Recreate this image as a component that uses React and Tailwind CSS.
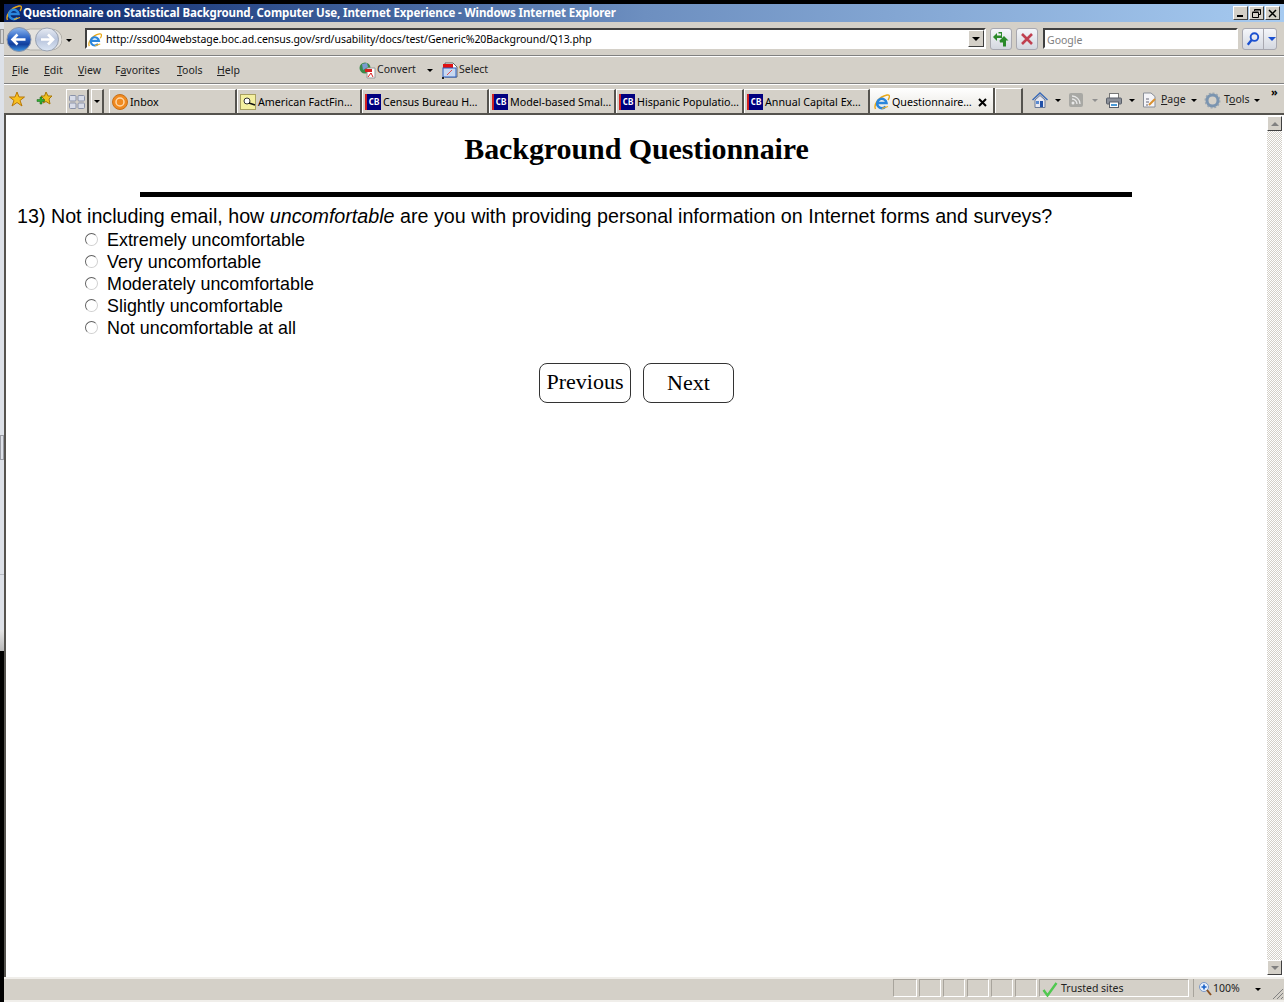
import React from "react";

const F = "font-['Liberation_Sans',Arial,sans-serif]";
const T = "font-['Noto_Sans',sans-serif]";

function IE({ s = 16 }) {
  return (
    <svg width={s} height={s} viewBox="0 0 16 16" className="shrink-0">
      <path d="M1.500 15C-.500 11 4 3 13 1C16 .500 16 3 14 6" fill="none" stroke="#e8a818" strokeWidth="1.400" />
      <path d="M3.800 9H12.500A4.700 4.700 0 1 0 11.500 12.500" fill="none" stroke="#2a86dc" strokeWidth="2.500" />
      <path d="M8 14.500L14 12.500" stroke="#f0b020" strokeWidth="1.200" />
    </svg>
  );
}

function CB() {
  return (
    <span className="w-[16px] h-[16px] bg-[#000080] text-white text-[9px] leading-[16px] font-bold font-['DejaVu_Sans_Mono',monospace] text-center shrink-0 border-l-2 border-l-[#d02020]">
      CB
    </span>
  );
}

function Caret({ className = "border-t-black" }) {
  return <span className={`block w-0 h-0 border-x-[3px] border-x-transparent border-t-[3px] shrink-0 ${className}`} />;
}

function Tab({ w, icon, label }) {
  return (
    <div className={`h-[24px] flex items-center pl-[2px] pt-[1px] gap-[2px] border-t border-l border-t-white border-l-white border-r-2 border-r-[#55534e] overflow-hidden shrink-0 ${w}`}>
      {icon}
      <span className="text-[10.7px] text-black whitespace-nowrap">{label}</span>
    </div>
  );
}

function Radio({ label }) {
  return (
    <div className="h-[22px] flex items-center pl-[79px]">
      <span className="w-[13px] h-[13px] rounded-full border border-t-[#606060] border-l-[#606060] border-r-[#d0d0d0] border-b-[#d0d0d0] bg-white -mt-[2px] shrink-0" />
      <span className="ml-[9px] text-black">{label}</span>
    </div>
  );
}

function WinBtn({ children }) {
  return (
    <span className="w-[15px] h-[14px] bg-[#d4d0c8] border border-t-white border-l-white border-r-[#404040] border-b-[#404040] flex items-center justify-center text-black">
      {children}
    </span>
  );
}

function SB({ up }) {
  return (
    <div className="w-[15px] h-[15px] shrink-0 bg-[#d4d0c8] border border-t-white border-l-white border-r-[#404040] border-b-[#404040] flex items-center justify-center">
      <span className={`w-0 h-0 border-x-[4px] border-x-transparent ${up ? "border-b-[4px] border-b-[#808080]" : "border-t-[4px] border-t-[#808080]"}`} />
    </div>
  );
}

const glossBtn = "h-[22px] rounded-[3px] border border-[#a8a8b0] bg-gradient-to-b from-[#f4f6fa] to-[#d4d8e0] flex items-center shrink-0";
const sunken = "border-2 border-t-[#404040] border-l-[#404040] border-r-white border-b-white";

export default function App() {
  return (
    <div className={`w-[1284px] h-[1002px] overflow-hidden flex bg-black ${T}`}>
      {/* strip of what lies behind the window */}
      <div className="w-[4px] shrink-0 flex flex-col bg-[#dde1e8]">
        <div className="h-[22px] bg-black shrink-0" />
        <div className="h-[15px] mt-[7px] shrink-0 border border-[#9a9a9a] bg-[#d4d4d4]" />
        <div className="h-[25px] mt-[391px] shrink-0 border border-[#9a9ca4] bg-[#dde1e8]" />
        <div className="h-[1px] mt-[114px] shrink-0 bg-[#b8bcc4]" />
        <div className="h-[21px] mt-[55px] shrink-0 bg-gradient-to-b from-[#e4e4e4] to-[#b8b8b8]" />
        <div className="flex-1 bg-black" />
      </div>

      {/* IE window */}
      <div className="w-[1280px] shrink-0 flex flex-col bg-[#d4d0c8]">
        <div className="h-[4px] bg-black shrink-0" />
        {/* title bar */}
        <div className="h-[18px] shrink-0 flex items-center pl-[2px] pr-[4px] bg-gradient-to-r from-[#0a246a] via-[#6d8fc0] to-[#a6caf0]">
          <IE s={16} />
          <span className="ml-[1px] text-[11.500px] tracking-[-0.110px] font-bold text-white whitespace-nowrap">
            Questionnaire on Statistical Background, Computer Use, Internet Experience - Windows Internet Explorer
          </span>
          <div className="ml-auto flex gap-[1px]">
            <WinBtn>
              <span className="w-[6px] h-[2px] bg-black mt-[6px] mr-[2px]" />
            </WinBtn>
            <WinBtn>
              <svg width="9" height="9" viewBox="0 0 9 9" fill="none" stroke="black">
                <path d="M2.500 2V.500H8.500V5.500H6.500" />
                <path d="M.500 3.500H6.500V8.500H.500Z" />
                <path d="M.500 3H6.500M2.500 1H8.500" />
              </svg>
            </WinBtn>
            <WinBtn>
              <svg width="9" height="9" viewBox="0 0 9 9" stroke="black" strokeWidth="1.500">
                <path d="M1 1L8 8M8 1L1 8" />
              </svg>
            </WinBtn>
          </div>
        </div>

        {/* address row */}
        <div className="h-[34px] shrink-0 flex items-start pt-[6px] pl-[2px] border-b border-b-[#808080]">
          <svg width="56" height="28" viewBox="0 0 56 28" className="shrink-0 -mt-[2px]">
            <defs>
              <linearGradient id="backg" x1="0" y1="0" x2="0" y2="1">
                <stop offset="0" stopColor="#8fb8ee" />
                <stop offset="0.450" stopColor="#2a62c4" />
                <stop offset="0.700" stopColor="#123f9c" />
                <stop offset="1" stopColor="#3f9ae8" />
              </linearGradient>
              <linearGradient id="fwdg" x1="0" y1="0" x2="0" y2="1">
                <stop offset="0" stopColor="#e8ecf4" />
                <stop offset="0.500" stopColor="#b8c4dc" />
                <stop offset="1" stopColor="#dce6f4" />
              </linearGradient>
            </defs>
            <rect x="14" y="3" width="42" height="21" rx="10.500" fill="#e4e2de" stroke="#b0aea8" />
            <circle cx="13" cy="13.500" r="12" fill="url(#backg)" stroke="#8a94a8" />
            <path d="M6.500 13.500H19.500M11.500 8.500L6.500 13.500L11.500 18.500" fill="none" stroke="white" strokeWidth="2.600" />
            <circle cx="41" cy="13.500" r="11.500" fill="url(#fwdg)" stroke="#9aa2b0" />
            <path d="M35 13.500H47M42 8.500L47 13.500L42 18.500" fill="none" stroke="white" strokeWidth="2.600" />
          </svg>
          <Caret className="ml-[4px] mt-[11px] border-t-black" />
          <div className={`w-[901px] h-[21px] ml-[13px] flex items-center bg-white shrink-0 ${sunken}`}>
            <span className="ml-[1px] pt-[3px]"><IE s={14} /></span>
            <span className="ml-[4px] pt-[3px] text-[10.500px] tracking-[-0.040px] text-black whitespace-nowrap">
              http://ssd004webstage.boc.ad.census.gov/srd/usability/docs/test/Generic%20Background/Q13.php
            </span>
            <span className="ml-auto w-[16px] h-[17px] bg-[#d4d0c8] border border-t-white border-l-white border-r-[#404040] border-b-[#404040] flex items-center justify-center">
              <span className="w-0 h-0 border-x-[4px] border-x-transparent border-t-[4px] border-t-black" />
            </span>
          </div>
          <div className={`ml-[4px] w-[22px] justify-center ${glossBtn}`}>
            <svg width="16" height="15" viewBox="0 0 16 15">
              <path d="M0 5L4 1V3.500H8V1.500H5.500V0H9V6H4V9Z" fill="#2a8a2a" />
              <path d="M6.500 8.500L11 4L15.500 8.500H13V14.500H10V10.500H7Z" fill="#2a8a2a" />
            </svg>
          </div>
          <div className={`ml-[4px] w-[22px] justify-center ${glossBtn}`}>
            <svg width="14" height="14" viewBox="0 0 14 14" stroke="#c04050" strokeWidth="2.600">
              <path d="M2 2L12 12M12 2L2 12" />
            </svg>
          </div>
          <div className={`ml-[5px] w-[195px] h-[21px] bg-white text-[10.500px] text-[#808080] leading-[20px] pl-[2px] ${sunken}`}>
            Google
          </div>
          <div className={`ml-[4px] w-[35px] ${glossBtn}`}>
            <svg width="21" height="20" viewBox="0 0 21 20" fill="none" stroke="#1a50d0" strokeWidth="2" className="border-r border-r-[#a8a8b0]">
              <circle cx="12" cy="8" r="4" />
              <path d="M9 11L5 16" strokeWidth="2.500" />
            </svg>
            <span className="ml-[4px] w-0 h-0 border-x-[4px] border-x-transparent border-t-[4px] border-t-[#1a50d0]" />
          </div>
        </div>

        {/* menu row */}
        <div className="h-[28px] shrink-0 flex items-center border-t border-t-white border-b border-b-[#808080] pt-[2px] pl-[8px] text-[10.500px] text-[#222]">
          <span className="w-[32px]"><u>F</u>ile</span>
          <span className="w-[34px]"><u>E</u>dit</span>
          <span className="w-[37px]"><u>V</u>iew</span>
          <span className="w-[62px]">F<u>a</u>vorites</span>
          <span className="w-[40px]"><u>T</u>ools</span>
          <span className="w-[142px]"><u>H</u>elp</span>
          <div className="flex items-center h-[18px] mb-[2px] text-[10.500px]">
            <svg width="17" height="17" viewBox="0 0 17 17" className="shrink-0">
              <circle cx="6" cy="6" r="5.500" fill="#3a8a4a" />
              <path d="M3 2L8 1L9 5L4 8Z" fill="#7a9ad0" />
              <path d="M8 6H16V16H8Z" fill="white" stroke="#999" />
              <path d="M6 7H13V10H6Z" fill="#d82020" />
              <path d="M9 15L12 11L14 15" fill="none" stroke="#d82020" />
            </svg>
            <span className="ml-[1px] w-[38px] whitespace-nowrap">Convert</span>
            <Caret className="ml-[12px] border-t-black" />
            <svg width="16" height="17" viewBox="0 0 16 17" className="ml-[9px] shrink-0">
              <path d="M3 1H11L15 5V15H3Z" fill="white" stroke="#666" />
              <rect x="1" y="2" width="10" height="4" fill="#e01010" />
              <rect x="1" y="6" width="13" height="9" fill="#c8d8f0" stroke="#2a5fc0" />
              <path d="M5 13L10 8" stroke="#e05050" />
              <rect x="0" y="15" width="2" height="2" fill="#222" />
            </svg>
            <span className="ml-[1px]">Select</span>
          </div>
        </div>

        {/* tabs row */}
        <div className="h-[31px] shrink-0 flex items-end border-t border-t-white border-b-2 border-b-[#55534e]">
          <div className="w-[62px] h-full shrink-0 pl-[5px] flex items-center">
            <svg width="16" height="16" viewBox="0 0 16 16">
              <path d="M8 1L10 6H15.500L11 9.500L13 15L8 11.500L3 15L5 9.500L.500 6H6Z" fill="#f8c020" stroke="#b87808" />
            </svg>
            <svg width="17" height="16" viewBox="0 0 17 16" className="ml-[11px]">
              <path d="M10 1L12 5H16L13 8L14 13L10 10.500L7 12L8 8L5 5H8.500Z" fill="#f0c020" stroke="#a87808" />
              <path d="M4 6H6V8.500H8.500V10.500H6V13H4V10.500H1V8.500H4Z" fill="#30b030" stroke="#186018" strokeWidth="0.500" />
            </svg>
          </div>
          <div className="w-[23px] h-[24px] shrink-0 border-t border-l border-t-white border-l-white border-r-2 border-r-[#55534e] flex items-center justify-center mr-[2px]">
            <svg width="16" height="16" viewBox="0 0 16 16" fill="#d8dce8" stroke="#8a92a8">
              <rect x=".500" y="1.500" width="6.500" height="5.500" rx="1" />
              <rect x="9" y="1.500" width="6.500" height="5.500" rx="1" />
              <rect x=".500" y="9" width="6.500" height="5.500" rx="1" />
              <rect x="9" y="9" width="6.500" height="5.500" rx="1" />
            </svg>
          </div>
          <div className="w-[13px] h-[24px] shrink-0 border-t border-l border-t-white border-l-white border-r-2 border-r-[#55534e] flex items-center justify-center mr-[5px]">
            <Caret />
          </div>
          <Tab
            w="w-[128px]"
            label="Inbox"
            icon={
              <svg width="16" height="16" viewBox="0 0 16 16" className="shrink-0">
                <circle cx="8" cy="8" r="7.500" fill="#f08a20" stroke="#c87018" />
                <circle cx="8" cy="8" r="4" fill="none" stroke="#ffd8a8" strokeWidth="1.500" />
              </svg>
            }
          />
          <Tab
            w="w-[125px]"
            label="American FactFin…"
            icon={
              <svg width="16" height="16" viewBox="0 0 16 16" className="shrink-0">
                <rect x=".500" y=".500" width="15" height="15" fill="#f4f0a0" stroke="#a8a060" />
                <circle cx="7" cy="7" r="3" fill="white" stroke="#333" />
                <path d="M9 9L15 11" stroke="#111" strokeWidth="1.500" />
              </svg>
            }
          />
          <Tab w="w-[127px]" label="Census Bureau H…" icon={<CB />} />
          <Tab w="w-[127px]" label="Model-based Smal…" icon={<CB />} />
          <Tab w="w-[128px]" label="Hispanic Populatio…" icon={<CB />} />
          <Tab w="w-[126px]" label="Annual Capital Ex…" icon={<CB />} />
          <div className="w-[125px] h-[25px] shrink-0 flex items-center pl-[4px] pt-[3px] bg-gradient-to-b from-white to-[#e8e6e0] border-r-2 border-r-[#55534e]">
            <IE s={16} />
            <span className="ml-[2px] text-[10.700px] text-black whitespace-nowrap">Questionnaire…</span>
            <svg width="9" height="9" viewBox="0 0 9 9" stroke="black" strokeWidth="2" className="ml-[6px] shrink-0">
              <path d="M1 1L8 8M8 1L1 8" />
            </svg>
          </div>
          <div className="w-[28px] h-[25px] shrink-0 border-t border-l border-t-white border-l-white border-r-2 border-r-[#55534e]" />
          {/* command bar */}
          <div className="h-[18px] mb-[4px] ml-[9px] flex items-center text-[10.500px] text-[#222] shrink-0">
            <svg width="16" height="17" viewBox="0 0 16 17" className="shrink-0">
              <path d="M.500 8L8 1L15.500 8" fill="none" stroke="#3a6ab8" strokeWidth="1.500" />
              <path d="M3 8L8 3.500L13 8V15.500H3Z" fill="#e8e8f0" stroke="#6a7a98" />
              <rect x="8" y="9" width="3" height="6" fill="#2050a8" />
              <rect x="4" y="9" width="3" height="3" fill="#5a8ad0" />
            </svg>
            <Caret className="ml-[7px] border-t-black" />
            <svg width="14" height="14" viewBox="0 0 14 14" className="ml-[8px] shrink-0">
              <rect width="14" height="14" rx="2" fill="#a8a8a4" />
              <circle cx="4" cy="10" r="1.500" fill="#e8e8e8" />
              <path d="M3 6A5 5 0 0 1 8 11M3 3A8 8 0 0 1 11 11" fill="none" stroke="#e8e8e8" strokeWidth="1.300" />
            </svg>
            <Caret className="ml-[9px] border-t-[#909090]" />
            <svg width="16" height="15" viewBox="0 0 16 15" className="ml-[8px] shrink-0">
              <rect x="3.500" y=".500" width="9" height="5" fill="white" stroke="#777" />
              <rect x=".500" y="5" width="15" height="6" rx="1" fill="#8a8f98" stroke="#5a5f68" />
              <rect x="3.500" y="9" width="9" height="5.500" fill="white" stroke="#5a5f68" />
              <rect x="5" y="11" width="6" height="2" fill="#4a9ad8" />
            </svg>
            <Caret className="ml-[7px] border-t-black" />
            <svg width="15" height="16" viewBox="0 0 15 16" className="ml-[7px] shrink-0">
              <path d="M1.500 1H9L13 4.500V15H1.500Z" fill="#f4f4f8" stroke="#8a8f98" />
              <path d="M4 7H7M4 10H7M4 13H6" stroke="#667" />
              <path d="M7 13L13 7" stroke="#d89030" strokeWidth="2" />
            </svg>
            <span className="ml-[4px] w-[24px]"><u>P</u>age</span>
            <Caret className="ml-[6px] border-t-black" />
            <svg width="17" height="17" viewBox="0 0 17 17" fill="none" className="ml-[7px] shrink-0">
              <circle cx="8.500" cy="8.500" r="5.500" stroke="#7a94b0" strokeWidth="3" />
              <circle cx="8.500" cy="8.500" r="7.300" stroke="#98a4b0" strokeWidth="1.300" strokeDasharray="2 1.800" />
            </svg>
            <span className="ml-[3px] w-[25px]">T<u>o</u>ols</span>
            <Caret className="ml-[5px] border-t-black" />
          </div>
          <span className="self-start ml-[11px] text-[11px] font-bold leading-[14px] text-black">»</span>
        </div>

        {/* main */}
        <div className="flex-1 min-h-0 flex">
          <div className={`flex-1 min-w-0 bg-white border-l-2 border-l-[#55534e] ${F}`}>
            <h1 className="text-center font-['Liberation_Serif',serif] font-bold text-[30px] tracking-[-0.080px] leading-[37px] mt-[15px] text-black">
              Background Questionnaire
            </h1>
            <div className="h-[5px] bg-black ml-[134px] w-[992px] mt-[25px]" />
            <div className="text-[17.900px] leading-[22px] text-black">
              <p className="pl-[11px] h-[22px] mt-[8px] mb-[2px] text-[19.700px] whitespace-nowrap">
                13) Not including email, how <i>uncomfortable</i> are you with providing personal information on Internet forms and surveys?
              </p>
              <Radio label="Extremely uncomfortable" />
              <Radio label="Very uncomfortable" />
              <Radio label="Moderately uncomfortable" />
              <Radio label="Slightly uncomfortable" />
              <Radio label="Not uncomfortable at all" />
            </div>
            <div className="flex gap-[12px] mt-[24px] ml-[533px] font-['Liberation_Serif',serif] text-[22px] text-black">
              <button className="w-[92px] h-[40px] rounded-[8px] border border-[#333] bg-white pb-[3px]">Previous</button>
              <button className="w-[91px] h-[40px] rounded-[8px] border border-[#333] bg-white pb-[1px]">Next</button>
            </div>
          </div>
          {/* scrollbar */}
          <div className="w-[17px] shrink-0 flex flex-col items-start bg-white pt-[1px] pb-[2px]">
            <SB up />
            <div className="flex-1 w-[15px] bg-[repeating-conic-gradient(#d4d0c8_0%_25%,#ffffff_0%_50%)] bg-[length:2px_2px]" />
            <SB />
          </div>
        </div>

        {/* status bar */}
        <div className="h-[25px] shrink-0 border-t-2 border-t-[#f0eeea] border-b-2 border-b-[#f0eeea] flex items-start pl-[889px] text-[10.500px] text-[#222]">
          <div className="flex h-[18px] gap-[2px]">
            {[0, 1, 2, 3, 4, 5].map((i) => (
              <span key={i} className={`border border-t-[#a8a49c] border-l-[#a8a49c] border-r-white border-b-white ${i === 0 ? "w-[24px]" : "w-[22px]"}`} />
            ))}
          </div>
          <div className="ml-[2px] h-[18px] w-[150px] border border-t-[#a8a49c] border-l-[#a8a49c] border-r-white border-b-white flex items-center pl-[2px] pt-[2px]">
            <svg width="16" height="16" viewBox="0 0 16 16" fill="none">
              <path d="M1.500 9L5.500 14.500L14.500 2" stroke="#50c850" strokeWidth="2.400" />
            </svg>
            <span className="ml-[3px]">Trusted sites</span>
          </div>
          <div className="ml-[4px] h-[18px] w-[73px] flex items-center pl-[4px] pt-[2px] border-l border-l-[#a8a49c]">
            <svg width="14" height="16" viewBox="0 0 14 16" fill="none" className="shrink-0">
              <circle cx="6" cy="6" r="4.500" fill="#e8f0fc" stroke="#7a98c8" />
              <path d="M6 3.500V8.500M3.500 6H8.500" stroke="#1860c8" strokeWidth="1.600" />
              <path d="M9 9L13 14" stroke="#8a5020" strokeWidth="2" />
            </svg>
            <span className="ml-[1px] w-[28px]">100%</span>
            <Caret className="ml-[14px] border-t-black" />
          </div>
          <svg width="12" height="12" viewBox="0 0 12 12" className="ml-auto self-end shrink-0" stroke="#808080">
            <path d="M11 1L1 11M11 5L5 11M11 9L9 11" />
          </svg>
        </div>
      </div>
    </div>
  );
}
